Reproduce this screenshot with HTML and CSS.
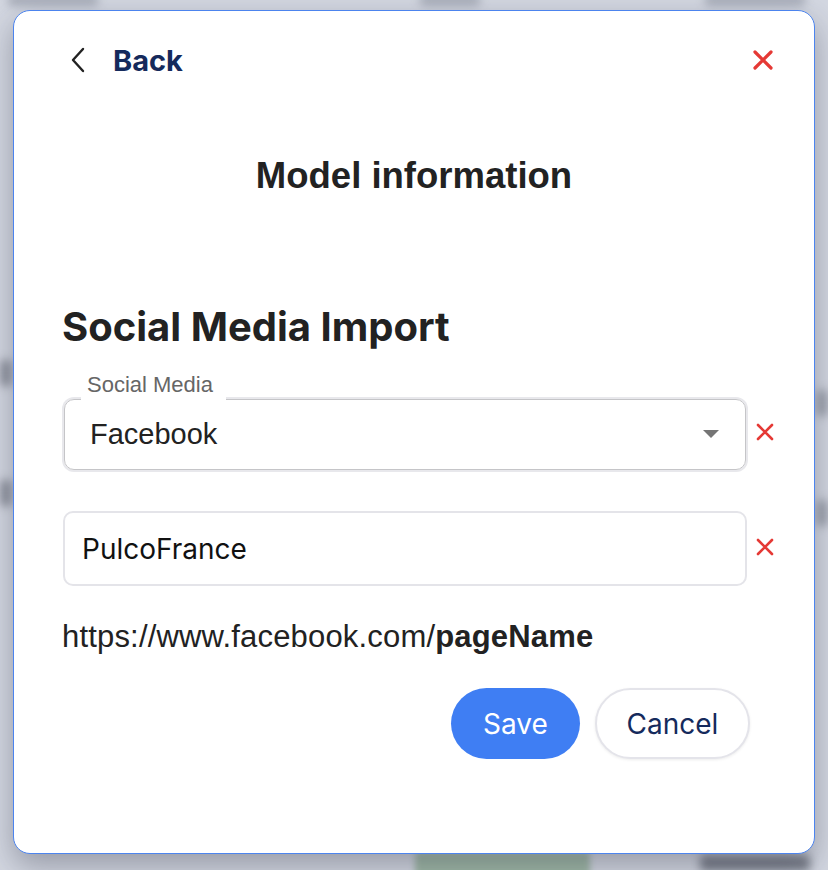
FILE: index.html
```html
<!DOCTYPE html>
<html lang="en">
<head>
<meta charset="utf-8">
<title>Model information</title>
<link rel="stylesheet" href="styles.css">
</head>
<body>
<div class="backdrop" aria-hidden="true">
  <span class="blur b1"></span>
  <span class="blur b2"></span>
  <span class="blur b3"></span>
  <span class="blur b4"></span>
  <span class="blur b5"></span>
  <span class="blur b6"></span>
  <span class="blur b7"></span>
  <span class="blur b8"></span>
  <span class="blur b9"></span>
</div>
<div class="stage">
  <div class="modal">
    <div class="header">
      <button class="back">
        <svg class="chev" width="16" height="26" viewBox="0 0 16 26"><path d="M13 2 L3 13 L13 24" fill="none" stroke="#222" stroke-width="2.4" stroke-linecap="round" stroke-linejoin="round"/></svg>
        <span>Back</span>
      </button>
      <button class="close" aria-label="Close">
        <svg width="20" height="20" viewBox="0 0 20 20"><path d="M2 2 L18 18 M18 2 L2 18" stroke="#e53935" stroke-width="3.2" stroke-linecap="round"/></svg>
      </button>
    </div>
    <h1 class="title">Model information</h1>
    <h2 class="heading">Social Media Import</h2>

    <div class="row first">
      <div class="select-wrap">
        <label class="flabel">Social Media</label>
        <div class="select">
          <span class="notch"></span>
          <span class="value">Facebook</span>
          <svg class="caret" width="16" height="9" viewBox="0 0 16 9"><path d="M0 0 L16 0 L8 8 Z" fill="#757575"/></svg>
        </div>
      </div>
      <svg class="rm sel-rm" width="18" height="18" viewBox="0 0 18 18"><path d="M2 2 L16 16 M16 2 L2 16" stroke="#e53935" stroke-width="2.6" stroke-linecap="round"/></svg>
    </div>

    <div class="row second">
      <div class="input">PulcoFrance</div>
      <svg class="rm in-rm" width="18" height="18" viewBox="0 0 18 18"><path d="M2 2 L16 16 M16 2 L2 16" stroke="#e53935" stroke-width="2.6" stroke-linecap="round"/></svg>
    </div>

    <p class="url">https://www.facebook.com/<b>pageName</b></p>

    <div class="actions">
      <button class="btn save">Save</button>
      <button class="btn cancel">Cancel</button>
    </div>
  </div>
</div>
</body>
</html>
```
FILE: styles.css
```css
* { box-sizing: border-box; }
html, body { margin: 0; padding: 0; }
body {
  width: 828px;
  height: 870px;
  overflow: hidden;
  background: #d3d7e1;
  font-family: "Liberation Sans", Arial, sans-serif;
  position: relative;
}
.backdrop { position: absolute; inset: 0; overflow: hidden; }
.blur {
  position: absolute;
  filter: blur(5px);
  background: #9ba0ab;
  border-radius: 4px;
}
.b1 { left: 8px; top: -6px; width: 90px; height: 12px; background: #a7acb8; }
.b2 { left: 420px; top: -6px; width: 60px; height: 12px; background: #a7acb8; }
.b3 { left: 705px; top: -6px; width: 100px; height: 12px; background: #a7acb8; }
.b4 { left: 0; top: 360px; width: 12px; height: 26px; background: #8c909b; }
.b5 { left: 0; top: 480px; width: 12px; height: 26px; background: #8c909b; }
.b6 { left: 816px; top: 390px; width: 12px; height: 26px; }
.b7 { left: 816px; top: 500px; width: 12px; height: 26px; }
.b8 { left: 415px; top: 852px; width: 175px; height: 30px; background: #9fb8a6; filter: blur(3px); }
.b9 { left: 700px; top: 855px; width: 110px; height: 16px; background: #7b808b; }

.stage {
  position: relative;
  padding: 10px 0 0 13px;
}
.modal {
  width: 802px;
  height: 844px;
  background: #fff;
  border: 1px solid #4c84ee;
  border-radius: 17px;
  box-shadow: 0 12px 30px rgba(40, 44, 60, 0.35);
  padding: 0 40px 0 49px;
  display: flex;
  flex-direction: column;
}
button { font: inherit; background: none; border: none; padding: 0; cursor: pointer; }

.header {
  margin-top: 29px;
  height: 40px;
  display: flex;
  align-items: center;
  justify-content: space-between;
  padding-left: 7px;
  padding-right: 1px;
}
.back {
  display: flex;
  align-items: center;
  gap: 27px;
  font-family: Inter, "Liberation Sans", sans-serif;
  font-weight: 700;
  font-size: 29px;
  color: #152a5c;
}
.chev { display: block; }
.close svg { display: block; }

.title {
  margin: 76px 9px 0 0;
  text-align: center;
  font-size: 36.5px;
  line-height: 40px;
  font-weight: 700;
  color: #222;
}
.heading {
  margin: 109px 0 0 -1px;
  font-family: Inter, "Liberation Sans", sans-serif;
  font-size: 40px;
  line-height: 44px;
  font-weight: 700;
  color: #222;
}

.row {
  display: flex;
  align-items: flex-end;
  gap: 9px;
}
.row.first { margin-top: 26px; }
.row.second { margin-top: 41px; align-items: center; }

.select-wrap { width: 684px; margin-left: 1px; }
.flabel {
  display: block;
  margin-left: 23px;
  font-size: 22px;
  line-height: 20px;
  color: #666;
  margin-bottom: 4px;
}
.select {
  position: relative;
  height: 71px;
  border: 1px solid #c5c5c8;
  border-radius: 10px;
  box-shadow: 0 0 0 2px #e8e8ec;
  display: flex;
  align-items: center;
  padding: 0 26px 0 25px;
}
.notch {
  position: absolute;
  left: 16px;
  top: -4px;
  width: 145px;
  height: 6px;
  background: #fff;
}
.value {
  flex: 1;
  font-size: 29px;
  color: #222;
}
.caret { display: block; }
.rm { display: block; flex: none; }
.sel-rm { margin-bottom: 29px; margin-left: 1px; }
.in-rm { margin-bottom: 3px; }

.input {
  width: 687px;
  height: 75px;
  border: 2px solid #e4e4e9;
  border-radius: 10px;
  display: flex;
  align-items: center;
  padding-left: 17px;
  font-family: Inter, "Liberation Sans", sans-serif;
  font-size: 28px;
  color: #111;
}

.url {
  margin: 36px 0 0 -1px;
  font-size: 31px;
  line-height: 30px;
  letter-spacing: 0.18px;
  color: #222;
}
.url b { font-weight: 700; }

.actions {
  margin-top: 36px;
  width: 687px;
  display: flex;
  justify-content: flex-end;
  gap: 15px;
}
.btn {
  height: 71px;
  border-radius: 36px;
  font-family: Inter, "Liberation Sans", sans-serif;
  font-size: 28px;
}
.save {
  width: 129px;
  background: #3f7ef3;
  color: #fff;
}
.cancel {
  width: 155px;
  background: #fff;
  color: #152a5c;
  border: 2px solid #e4e4ea;
  box-shadow: 0 1px 3px rgba(0,0,0,0.08);
}
```
